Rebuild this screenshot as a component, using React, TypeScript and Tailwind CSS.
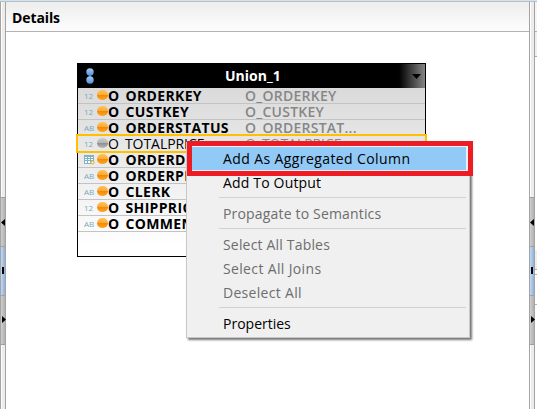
type Kind = "num" | "text" | "date";

const columns: { kind: Kind; name: string; source: string; muted?: boolean }[] = [
  { kind: "num", name: "O_ORDERKEY", source: "O_ORDERKEY" },
  { kind: "num", name: "O_CUSTKEY", source: "O_CUSTKEY" },
  { kind: "text", name: "O_ORDERSTATUS", source: "O_ORDERSTAT..." },
  { kind: "num", name: "O_TOTALPRICE", source: "O_TOTALPRICE", muted: true },
  { kind: "date", name: "O_ORDERDATE", source: "" },
  { kind: "text", name: "O_ORDERPRIORITY", source: "" },
  { kind: "text", name: "O_CLERK", source: "" },
  { kind: "num", name: "O_SHIPPRIORITY", source: "" },
  { kind: "text", name: "O_COMMENT", source: "" },
];

function TypeIcon({ kind }: { kind: Kind }) {
  if (kind === "date") {
    return (
      <svg width="11" height="10" viewBox="0 0 11 10" className="shrink-0" shapeRendering="crispEdges">
        <rect x="0" y="0" width="10" height="9" fill="#7fb3c6" />
        <path d="M1 2h2v1h-2zM4 2h2v1h-2zM7 2h2v1h-2zM1 4h2v1h-2zM4 4h2v1h-2zM7 4h2v1h-2zM1 6h2v2h-2zM4 6h2v2h-2z" fill="#fff" />
        <circle cx="8.5" cy="7.5" r="1.6" fill="#fff3c0" stroke="#eba92d" shapeRendering="auto" />
      </svg>
    );
  }
  return (
    <span className="w-[11px] shrink-0 text-[8px] leading-[15px] tracking-[-0.1px] text-[#76a9bb]">
      {kind === "num" ? "12" : "AB"}
    </span>
  );
}

function Ball({ muted }: { muted?: boolean }) {
  return (
    <span
      className={
        "mb-px h-[10px] w-[11px] shrink-0 rounded-full " +
        (muted
          ? "bg-[linear-gradient(#d0d0d0_0%,#b5b5b5_45%,#929292_55%,#b8b8b8_100%)]"
          : "bg-[linear-gradient(#ffc25a_0%,#ffad38_45%,#f48b08_55%,#ffa51f_100%)]")
      }
    />
  );
}

function Splitter() {
  return (
    <div className="flex w-[6px] shrink-0 flex-col border-x border-[#a3a3a3]">
      <div className="h-[195px] bg-[linear-gradient(90deg,#fff_25%,#eeebeb_25%)]" />
      <div className="flex h-[49px] items-center justify-end border-t border-[#a0a0a0] bg-[linear-gradient(90deg,#cfcfcf,#b0b0b0)]">
        <svg width="4" height="7" viewBox="0 0 4 7" className="shrink-0"><path d="M4 0v7L0 3.5z" /></svg>
      </div>
      <div className="flex h-[49px] items-center justify-center border-t border-[#a0a0a0] bg-[linear-gradient(90deg,#c3d9f3,#8fb0d8)]">
        <span className="mb-px h-[7px] w-[2px] bg-black" />
      </div>
      <div className="flex h-[50px] items-center border-y border-[#a0a0a0] bg-[linear-gradient(90deg,#cfcfcf,#b0b0b0)]">
        <svg width="4" height="7" viewBox="0 0 4 7" className="mb-px ml-px shrink-0"><path d="M0 0v7l4-3.5z" /></svg>
      </div>
      <div className="flex-1 bg-[linear-gradient(90deg,#fff_25%,#eeebeb_25%)]" />
    </div>
  );
}

function Node() {
  return (
    <div className="relative ml-[71px] mt-[31px] h-[194px] w-[349px] border border-black bg-[linear-gradient(#d9d9d9_10%,#fff_95%)]">
      <div className="flex h-[24px] items-center bg-black text-white">
        <svg width="10" height="18" viewBox="0 0 10 18" className="mb-px ml-[7px]">
          <defs>
            <linearGradient id="dot" x1="0" y1="0" x2="0" y2="1">
              <stop offset="0" stopColor="#a4c8f4" />
              <stop offset="1" stopColor="#5590d8" />
            </linearGradient>
          </defs>
          <path d="M5 7v4" stroke="#345d94" strokeWidth="2" />
          <circle cx="5" cy="5" r="3.7" fill="url(#dot)" />
          <circle cx="5" cy="13" r="3.7" fill="url(#dot)" />
        </svg>
        <span className="ml-[130px] flex-1 text-[14px] font-bold leading-[24px]">Union_1</span>
        <div className="flex h-full w-[26px] items-center justify-end bg-[linear-gradient(90deg,#000,#858585)] pr-[4px]">
          <svg width="9" height="5" viewBox="0 0 9 5"><path d="M0 0h9L4.5 5z" /></svg>
        </div>
      </div>
      {columns.map((c) => (
        <div key={c.name} className="flex h-[16px] items-center overflow-hidden border-b border-[#c3c3c3] pl-[6px]">
          <TypeIcon kind={c.kind} />
          <span className="w-[2px] shrink-0" />
          <Ball muted={c.muted} />
          <span className={"h-[14px] w-[137px] shrink-0 self-start overflow-hidden whitespace-nowrap text-[14px] leading-[16px] text-black " + (c.muted ? "tracking-[-0.05px]" : "font-bold tracking-[0.33px]")}>
            {c.name}
          </span>
          <span className={"h-[15px] flex-1 overflow-hidden whitespace-nowrap text-[14px] leading-[16px] text-[#878787] " + (c.muted ? "tracking-[-0.05px]" : "font-semibold tracking-[0.25px]")}>
            {c.source}
          </span>
        </div>
      ))}
      <div className="absolute left-[-2px] top-[70px] h-[19px] w-[351px] border-2 border-[#ffc000]" />
    </div>
  );
}

function Item({ label, track, disabled }: { label: string; track: string; disabled?: boolean }) {
  return (
    <div className={"h-[24px] pl-[32px] leading-[23px] " + track + (disabled ? " text-[#6d6d6d]" : " text-black")}>
      {label}
    </div>
  );
}

function Separator() {
  return <div className="mb-[4px] ml-[28px] mt-[2px] h-px bg-[#d2d2d2]" />;
}

function ContextMenu() {
  return (
    <div className="absolute left-[186px] top-[142px] h-[196px] w-[284px] whitespace-nowrap border border-[#c8c8c8] bg-[#f0f0f0] pl-[4px] pr-[3px] pt-[4px] text-[14px] shadow-[2px_2px_2px_#777]">
      <div className="mb-px h-[23px] bg-[#91c9f7]"><Item label="Add As Aggregated Column" track="tracking-[0.4px]" /></div>
      <Item label="Add To Output" track="tracking-[0.17px]" />
      <Separator />
      <Item label="Propagate to Semantics" track="tracking-[0.17px]" disabled />
      <Separator />
      <Item label="Select All Tables" track="tracking-[0.18px]" disabled />
      <Item label="Select All Joins" track="tracking-[0.35px]" disabled />
      <Item label="Deselect All" track="tracking-[0.3px]" disabled />
      <Separator />
      <Item label="Properties" track="tracking-normal" />
    </div>
  );
}

export default function App() {
  return (
    <div className="relative flex h-[409px] w-[537px] flex-col overflow-hidden bg-white font-['Open_Sans','Noto_Sans',sans-serif]">
      <div className="h-[2px] shrink-0 border-t border-[#d7e1e8] bg-[#b2c3cf]" />
      <div className="flex min-h-0 flex-1">
        <Splitter />
        <main className="w-[523px] shrink-0">
          <header className="h-[30px] border-b border-[#b3b3b3] bg-[linear-gradient(#ededed,#fdfdfd)] pl-[6px] text-[14px] font-bold leading-[31px] tracking-[-0.1px] text-black">
            Details
          </header>
          <Node />
        </main>
        <Splitter />
        <aside className="flex flex-1 flex-col bg-white">
          <div className="h-[30px] border-b border-[#b3b3b3] bg-[#f5f5f5]" />
          <div className="h-[25px] border-b border-[#aaa] bg-[#eee]" />
          <div className="h-[193px]" />
          <div className="h-[20px] border-b border-[#aaa] bg-[#eee]" />
          <div className="h-[5px] border-b border-[#aaa]" />
          <div className="h-[30px] border-b border-[#b3b3b3]" />
        </aside>
      </div>
      <ContextMenu />
      <div className="absolute left-[187px] top-[141px] h-[35px] w-[286px] border-[5px] border-[#ed1c24]" />
    </div>
  );
}
